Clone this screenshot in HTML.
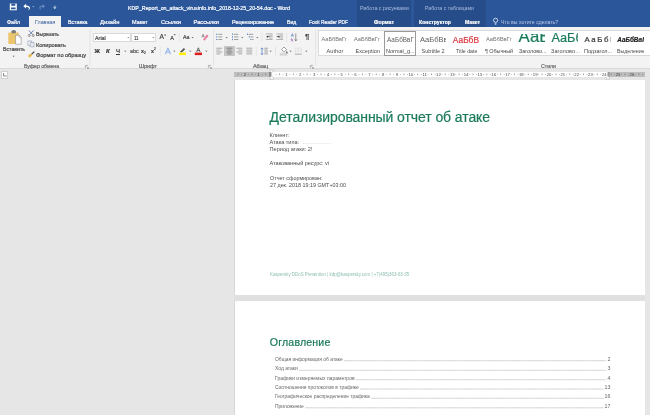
<!DOCTYPE html>
<html lang="ru"><head><meta charset="utf-8"><title>KDP_Report_on_attack_virusinfo.info_2018-12-25_20-54.doc - Word</title>
<style>
*{box-sizing:border-box;margin:0;padding:0}
html,body{width:650px;height:415px;overflow:hidden;background:#e6e6e6;font-family:"Liberation Sans",sans-serif}
.t{position:absolute;white-space:nowrap;line-height:10px;-webkit-text-stroke:0.2px}
.b{position:absolute}
svg{position:absolute;left:0;top:0;will-change:transform}
#txt{position:absolute;left:0;top:0;width:650px;height:415px;will-change:transform}

</style></head><body>
<div class="b" style="left:0;top:0;width:650px;height:26.5px;background:#2b579a"></div>
<div class="b" style="left:357px;top:0;width:54px;height:26.5px;background:#264d8a"></div>
<div class="b" style="left:413.5px;top:0;width:72.5px;height:26.5px;background:#264d8a"></div>
<div class="b" style="left:0;top:26.5px;width:650px;height:42.5px;background:#f3f3f3;border-bottom:1px solid #dadada"></div>
<div class="b" style="left:28.8px;top:16px;width:32.4px;height:11px;background:#f3f3f3"></div>
<div class="b" style="left:317.5px;top:29.6px;width:333px;height:26.9px;background:#fff;border:1px solid #dadada;border-right:0"></div>
<div class="b" style="left:384px;top:31px;width:32px;height:24.6px;border:1px solid #9a9a9a;background:#fff"></div>
<div class="b" style="left:93px;top:33px;width:38.4px;height:9px;background:#fff;border:0.5px solid #dadada"></div>
<div class="b" style="left:131.4px;top:33px;width:24.8px;height:9px;background:#fff;border:0.5px solid #dadada"></div>
<div class="b" style="left:224px;top:46px;width:10.6px;height:10.2px;background:#c6c6c6"></div>
<div class="b" style="left:234.4px;top:80px;width:410.6px;height:214.6px;background:#fff;border-left:1px solid #d6d6d6"></div>
<div class="b" style="left:234.4px;top:300.8px;width:410.6px;height:120px;background:#fff;border-left:1px solid #d6d6d6"></div>
<div class="b" style="left:234.4px;top:294.6px;width:410.6px;height:6.2px;background:#e0e0e0"></div>
<div class="b" style="left:234px;top:72px;width:411px;height:4.6px;background:#fff"></div>
<div class="b" style="left:234px;top:72px;width:37px;height:4.6px;background:#bebebe"></div>
<div class="b" style="left:608px;top:72px;width:37px;height:4.6px;background:#bebebe"></div>
<div class="b" style="left:1px;top:71px;width:7.4px;height:7.6px;background:#fff;border:0.5px solid #d0d0d0"></div>

<svg width="650" height="415" viewBox="0 0 650 415">
<path d="M9.8 3.6h7v6.6h-7z" fill="#fff"/><path d="M11.3 3.6h4v2.2h-4z M11 7.6h4.6v1.6h-4.6z" fill="#2b579a"/>
<path d="M23.3 6.2l2.8-2.4v1.6c2.6 0 3.9 1.2 3.9 2.6c0 1.200-.9 2-2.4 2.200c.9-.4 1.300-1 1.300-1.800c0-.9-.9-1.500-2.800-1.500v1.700z" fill="#fff"/>
<path d="M32.40 6.30h1.8l-0.90 1z" fill="#dfe7f5"/>
<path d="M45 6.200l-2.300-2v1.300c-2.200 0-3.300 1-3.300 2.200c0 1 .8 1.700 2 1.900c-.7-.4-1.100-.9-1.100-1.500c0-.8.800-1.300 2.400-1.300v1.400z" fill="#6f8fc4"/>
<path d="M53.600 6.200h2.400M53.600 7.600h2.400l-1.200 1.200z" stroke="#dfe7f5" stroke-width=".5" fill="#dfe7f5"/>
<circle cx="495.600" cy="20.300" r="2.100" fill="none" stroke="#e8eefa" stroke-width=".8"/><path d="M494.700 23.300h1.800M494.900 24.400h1.400" stroke="#e8eefa" stroke-width=".7"/>
<path d="M90 29.500v37" stroke="#dcdcdc" stroke-width=".7"/>
<path d="M213.6 29.500v37" stroke="#dcdcdc" stroke-width=".7"/>
<path d="M315.6 29.500v37" stroke="#dcdcdc" stroke-width=".7"/>
<path d="M179.4 33v9" stroke="#dedede" stroke-width=".6"/>
<path d="M160.3 46.5v9.5" stroke="#dedede" stroke-width=".6"/>
<path d="M262 33v9" stroke="#dedede" stroke-width=".6"/>
<path d="M286.6 33v9" stroke="#dedede" stroke-width=".6"/>
<path d="M256.3 46.5v9.5" stroke="#dedede" stroke-width=".6"/>
<path d="M275.6 46.5v9.5" stroke="#dedede" stroke-width=".6"/>
<rect x="8.300" y="32.400" width="10.400" height="11.500" rx=".6" fill="#ebc46c"/>
<rect x="11.500" y="30.600" width="4.400" height="2.600" rx=".6" fill="#7a7a7a"/><rect x="12.800" y="30" width="1.800" height="1.400" fill="#7a7a7a"/>
<path d="M15.600 35.200h3.600l2 2v7h-5.600z" fill="#fff" stroke="#8a8a8a" stroke-width=".6"/><path d="M19.200 35.200v2h2" fill="none" stroke="#8a8a8a" stroke-width=".5"/>
<path d="M12.50 55.70h2.2l-1.10 1.2z" fill="#666"/>
<path d="M28.800 30.400l4 4.200M33.600 30.400l-4 4.200" stroke="#4c6fa8" stroke-width=".8" fill="none"/><circle cx="29.200" cy="35.500" r="1" fill="none" stroke="#5a5a5a" stroke-width=".6"/><circle cx="33.200" cy="35.500" r="1" fill="none" stroke="#5a5a5a" stroke-width=".6"/>
<path d="M28 41h3.600v4.400h-3.600z" fill="#fff" stroke="#7f8ea8" stroke-width=".6"/><path d="M30.200 42.400h3.800v4.400h-3.800z" fill="#fff" stroke="#7f8ea8" stroke-width=".6"/><path d="M31 43.800h2.200M31 45.200h2.200" stroke="#9aa6bb" stroke-width=".4"/>
<path d="M34.300 51.600l-2.800 2.800" stroke="#444" stroke-width="1.300"/><path d="M30.300 53.400l2 2l-2.600 2.400l-2-1.800z" fill="#e9bf55"/>
<path d="M85.4 68.0v-2.6h2.6" fill="none" stroke="#777" stroke-width=".5"/><path d="M86.60000000000001 66.60000000000001l1.8 1.8m0-1.4v1.4h-1.4" fill="none" stroke="#777" stroke-width=".5"/>
<path d="M127.30 37.25h2l-1.00 1.1z" fill="#666"/>
<path d="M152.30 37.25h2l-1.00 1.1z" fill="#666"/>
<path d="M164 35.400l1.100-1.400l1.100 1.400z" fill="#444"/>
<path d="M173.600 34.200h2.200l-1.100 1.400z" fill="#444"/>
<path d="M191.50 37.00h2.2l-1.10 1.2z" fill="#666"/>
<path d="M203 39.400l3.800-5l1.700 1.300l-3.800 5z" fill="#e8799c"/><path d="M204.400 37.600l1.700 1.300" stroke="#fff" stroke-width=".5"/><path d="M201.800 37.400l1.300-3.200l1.300 3.200M202.300 36.400h1.600" fill="none" stroke="#666" stroke-width=".6"/>
<path d="M124.20 50.70h2.2l-1.10 1.2z" fill="#666"/>
<path d="M165.300 54.200l2.600-6.200l2.600 6.200M166.300 52h3.200" fill="none" stroke="#c3d7f3" stroke-width="1.600" stroke-linejoin="round"/><path d="M165.300 54.200l2.600-6.200l2.600 6.200M166.300 52h3.200" fill="none" stroke="#7ea6de" stroke-width=".55"/>
<path d="M173.20 50.70h2.2l-1.10 1.2z" fill="#666"/>
<path d="M180.400 51.400l3.400-3.400l1.400 1.300l-3.500 3.400z" fill="#5a5a5a"/><path d="M180 52.200l.5-1l1 .9z" fill="#333"/><rect x="179" y="52.600" width="7" height="2.500" fill="#fff100"/>
<path d="M189.20 50.70h2.2l-1.10 1.2z" fill="#666"/>
<path d="M196.600 52l1.750-4.200l1.750 4.200M197.300 50.600h2.100" fill="none" stroke="#444" stroke-width=".8"/><rect x="194.800" y="52.600" width="7.200" height="2.500" fill="#e01b1b"/>
<path d="M205.20 50.70h2.2l-1.10 1.2z" fill="#666"/>
<path d="M208.4 68.0v-2.6h2.6" fill="none" stroke="#777" stroke-width=".5"/><path d="M209.6 66.60000000000001l1.8 1.8m0-1.4v1.4h-1.4" fill="none" stroke="#777" stroke-width=".5"/>
<rect x="216.200" y="33.70" width="1.100" height="1.100" fill="#4c78c0"/>
<rect x="216.200" y="36.30" width="1.100" height="1.100" fill="#4c78c0"/>
<rect x="216.200" y="38.90" width="1.100" height="1.100" fill="#4c78c0"/>
<path d="M218.30 34.30h4" stroke="#666" stroke-width="0.6"/>
<path d="M218.30 36.90h4" stroke="#666" stroke-width="0.6"/>
<path d="M218.30 39.50h4" stroke="#666" stroke-width="0.6"/>
<path d="M225.50 37.00h2.2l-1.10 1.2z" fill="#666"/>
<rect x="232.200" y="33.50" width=".8" height="1.500" fill="#4c78c0"/>
<rect x="232.200" y="36.10" width=".8" height="1.500" fill="#4c78c0"/>
<rect x="232.200" y="38.70" width=".8" height="1.500" fill="#4c78c0"/>
<path d="M234.00 34.30h4.4" stroke="#666" stroke-width="0.6"/>
<path d="M234.00 36.90h4.4" stroke="#666" stroke-width="0.6"/>
<path d="M234.00 39.50h4.4" stroke="#666" stroke-width="0.6"/>
<path d="M241.20 37.00h2.2l-1.10 1.2z" fill="#666"/>
<rect x="247" y="33.600" width="1" height="1.200" fill="#4c78c0"/><rect x="248.800" y="36.200" width="1" height="1.200" fill="#4c78c0"/><rect x="250.400" y="38.800" width="1" height="1.200" fill="#4c78c0"/>
<path d="M248.60 34.30h4.6" stroke="#666" stroke-width="0.6"/>
<path d="M250.40 36.90h3" stroke="#666" stroke-width="0.6"/>
<path d="M252.00 39.50h1.6" stroke="#666" stroke-width="0.6"/>
<path d="M256.20 37.00h2.2l-1.10 1.2z" fill="#666"/>
<path d="M265.80 33.90h6.8" stroke="#8a8a8a" stroke-width="0.6"/>
<path d="M265.80 39.50h6.8" stroke="#8a8a8a" stroke-width="0.6"/>
<path d="M269.00 35.30h3.6" stroke="#a8a8a8" stroke-width="0.7"/>
<path d="M269.00 36.70h3.6" stroke="#a8a8a8" stroke-width="0.7"/>
<path d="M269.00 38.10h3.6" stroke="#a8a8a8" stroke-width="0.7"/>
<path d="M276.30 33.90h6.8" stroke="#8a8a8a" stroke-width="0.6"/>
<path d="M276.30 39.50h6.8" stroke="#8a8a8a" stroke-width="0.6"/>
<path d="M279.50 35.30h3.6" stroke="#a8a8a8" stroke-width="0.7"/>
<path d="M279.50 36.70h3.6" stroke="#a8a8a8" stroke-width="0.7"/>
<path d="M279.50 38.10h3.6" stroke="#a8a8a8" stroke-width="0.7"/>
<path d="M266.300 36.700l1.500-1.300v.9h1.700v.8h-1.700v.9z" fill="#333"/>
<path d="M280 36.700l-1.500-1.300v.9h-1.700v.8h1.700v.9z" fill="#333"/>
<path d="M291.200 36.600l1.200-3l1.200 3M291.600 35.700h1.600" fill="none" stroke="#4c78c0" stroke-width=".6"/><path d="M291.300 41.400l.9-1.200c.5-.6.300-1.500-.5-1.500c-.7 0-.9.700-.4 1.100l1.900 1.600" fill="none" stroke="#8a4fb0" stroke-width=".6"/><path d="M295.800 33.400v7.400M294.600 39.400l1.200 1.600l1.200-1.600" fill="none" stroke="#555" stroke-width=".6"/>
<path d="M216.30 48.20h6" stroke="#777" stroke-width="0.6"/>
<path d="M216.30 50.10h4" stroke="#777" stroke-width="0.6"/>
<path d="M216.30 52.00h6" stroke="#777" stroke-width="0.6"/>
<path d="M216.30 53.90h4" stroke="#777" stroke-width="0.6"/>
<path d="M226.4 48.20h6" stroke="#555" stroke-width=".6"/>
<path d="M227.4 50.10h4" stroke="#555" stroke-width=".6"/>
<path d="M226.4 52.00h6" stroke="#555" stroke-width=".6"/>
<path d="M227.4 53.90h4" stroke="#555" stroke-width=".6"/>
<path d="M236.3 48.20h6" stroke="#777" stroke-width=".6"/>
<path d="M238.3 50.10h4" stroke="#777" stroke-width=".6"/>
<path d="M236.3 52.00h6" stroke="#777" stroke-width=".6"/>
<path d="M238.3 53.90h4" stroke="#777" stroke-width=".6"/>
<path d="M246.30 48.20h6" stroke="#777" stroke-width="0.6"/>
<path d="M246.30 50.10h6" stroke="#777" stroke-width="0.6"/>
<path d="M246.30 52.00h6" stroke="#777" stroke-width="0.6"/>
<path d="M246.30 53.90h6" stroke="#777" stroke-width="0.6"/>
<path d="M262 48v6.600M260.900 49.300l1.100-1.500l1.100 1.500M260.900 53.300l1.100 1.500l1.100-1.500" fill="none" stroke="#4c78c0" stroke-width=".7"/>
<path d="M264.40 48.20h3.4" stroke="#666" stroke-width="0.6"/>
<path d="M264.40 50.10h3.4" stroke="#666" stroke-width="0.6"/>
<path d="M264.40 52.00h3.4" stroke="#666" stroke-width="0.6"/>
<path d="M264.40 53.90h3.4" stroke="#666" stroke-width="0.6"/>
<path d="M269.50 50.70h2.2l-1.10 1.2z" fill="#666"/>
<path d="M281.600 49.400l2.400-2.400l2.600 2.600l-2.600 2.600z" fill="#fff" stroke="#666" stroke-width=".6"/><path d="M286.800 51c.6.900.9 1.400.9 1.800a.8.800 0 0 1-1.700 0c0-.4.300-.9.800-1.800z" fill="#666"/><rect x="280" y="53.600" width="7" height="1.600" fill="#d9d9d9" stroke="#bbb" stroke-width=".3"/>
<path d="M289.50 50.70h2.2l-1.10 1.2z" fill="#666"/>
<rect x="295.300" y="48" width="6" height="6" fill="none" stroke="#c4c4c4" stroke-width=".5" stroke-dasharray=".6 .6"/><path d="M298.300 48v6M295.300 51h6" stroke="#c4c4c4" stroke-width=".5" stroke-dasharray=".6 .6"/><path d="M295 54.200h6.600" stroke="#999" stroke-width=".7"/>
<path d="M305.20 50.70h2.2l-1.10 1.2z" fill="#666"/>
<path d="M310.4 68.0v-2.6h2.6" fill="none" stroke="#777" stroke-width=".5"/><path d="M311.59999999999997 66.60000000000001l1.8 1.8m0-1.4v1.4h-1.4" fill="none" stroke="#777" stroke-width=".5"/>
<path d="M3.600 73v3h3" fill="none" stroke="#555" stroke-width=".7"/>
<text x="244.96" y="75.800" font-size="4.200" fill="#3a3a3a" text-anchor="middle" font-family="Liberation Sans,sans-serif">2</text>
<text x="258.78" y="75.800" font-size="4.200" fill="#3a3a3a" text-anchor="middle" font-family="Liberation Sans,sans-serif">1</text>
<text x="286.42" y="75.800" font-size="4.200" fill="#4a4a4a" text-anchor="middle" font-family="Liberation Sans,sans-serif">1</text>
<text x="300.24" y="75.800" font-size="4.200" fill="#4a4a4a" text-anchor="middle" font-family="Liberation Sans,sans-serif">2</text>
<text x="314.06" y="75.800" font-size="4.200" fill="#4a4a4a" text-anchor="middle" font-family="Liberation Sans,sans-serif">3</text>
<text x="327.88" y="75.800" font-size="4.200" fill="#4a4a4a" text-anchor="middle" font-family="Liberation Sans,sans-serif">4</text>
<text x="341.70" y="75.800" font-size="4.200" fill="#4a4a4a" text-anchor="middle" font-family="Liberation Sans,sans-serif">5</text>
<text x="355.52" y="75.800" font-size="4.200" fill="#4a4a4a" text-anchor="middle" font-family="Liberation Sans,sans-serif">6</text>
<text x="369.34" y="75.800" font-size="4.200" fill="#4a4a4a" text-anchor="middle" font-family="Liberation Sans,sans-serif">7</text>
<text x="383.16" y="75.800" font-size="4.200" fill="#4a4a4a" text-anchor="middle" font-family="Liberation Sans,sans-serif">8</text>
<text x="396.98" y="75.800" font-size="4.200" fill="#4a4a4a" text-anchor="middle" font-family="Liberation Sans,sans-serif">9</text>
<text x="410.80" y="75.800" font-size="4.200" fill="#4a4a4a" text-anchor="middle" font-family="Liberation Sans,sans-serif">10</text>
<text x="424.62" y="75.800" font-size="4.200" fill="#4a4a4a" text-anchor="middle" font-family="Liberation Sans,sans-serif">11</text>
<text x="438.44" y="75.800" font-size="4.200" fill="#4a4a4a" text-anchor="middle" font-family="Liberation Sans,sans-serif">12</text>
<text x="452.26" y="75.800" font-size="4.200" fill="#4a4a4a" text-anchor="middle" font-family="Liberation Sans,sans-serif">13</text>
<text x="466.08" y="75.800" font-size="4.200" fill="#4a4a4a" text-anchor="middle" font-family="Liberation Sans,sans-serif">14</text>
<text x="479.90" y="75.800" font-size="4.200" fill="#4a4a4a" text-anchor="middle" font-family="Liberation Sans,sans-serif">15</text>
<text x="493.72" y="75.800" font-size="4.200" fill="#4a4a4a" text-anchor="middle" font-family="Liberation Sans,sans-serif">16</text>
<text x="507.54" y="75.800" font-size="4.200" fill="#4a4a4a" text-anchor="middle" font-family="Liberation Sans,sans-serif">17</text>
<text x="521.36" y="75.800" font-size="4.200" fill="#4a4a4a" text-anchor="middle" font-family="Liberation Sans,sans-serif">18</text>
<text x="535.18" y="75.800" font-size="4.200" fill="#4a4a4a" text-anchor="middle" font-family="Liberation Sans,sans-serif">19</text>
<text x="549.00" y="75.800" font-size="4.200" fill="#4a4a4a" text-anchor="middle" font-family="Liberation Sans,sans-serif">20</text>
<text x="562.82" y="75.800" font-size="4.200" fill="#4a4a4a" text-anchor="middle" font-family="Liberation Sans,sans-serif">21</text>
<text x="576.64" y="75.800" font-size="4.200" fill="#4a4a4a" text-anchor="middle" font-family="Liberation Sans,sans-serif">22</text>
<text x="590.46" y="75.800" font-size="4.200" fill="#4a4a4a" text-anchor="middle" font-family="Liberation Sans,sans-serif">23</text>
<text x="604.28" y="75.800" font-size="4.200" fill="#4a4a4a" text-anchor="middle" font-family="Liberation Sans,sans-serif">24</text>
<text x="618.10" y="75.800" font-size="4.200" fill="#3a3a3a" text-anchor="middle" font-family="Liberation Sans,sans-serif">25</text>
<text x="631.92" y="75.800" font-size="4.200" fill="#3a3a3a" text-anchor="middle" font-family="Liberation Sans,sans-serif">26</text>
<path d="M238.05 73.400v1.800" stroke="#555" stroke-width=".5"/>
<rect x="241.26" y="74" width=".6" height=".6" fill="#555"/>
<path d="M251.87 73.400v1.800" stroke="#555" stroke-width=".5"/>
<rect x="248.17" y="74" width=".6" height=".6" fill="#555"/>
<rect x="255.08" y="74" width=".6" height=".6" fill="#555"/>
<path d="M265.69 73.400v1.800" stroke="#555" stroke-width=".5"/>
<rect x="261.99" y="74" width=".6" height=".6" fill="#555"/>
<rect x="268.90" y="74" width=".6" height=".6" fill="#555"/>
<path d="M279.51 73.400v1.800" stroke="#555" stroke-width=".5"/>
<rect x="275.81" y="74" width=".6" height=".6" fill="#555"/>
<rect x="282.72" y="74" width=".6" height=".6" fill="#555"/>
<path d="M293.33 73.400v1.800" stroke="#555" stroke-width=".5"/>
<rect x="289.62" y="74" width=".6" height=".6" fill="#555"/>
<rect x="296.54" y="74" width=".6" height=".6" fill="#555"/>
<path d="M307.15 73.400v1.800" stroke="#555" stroke-width=".5"/>
<rect x="303.44" y="74" width=".6" height=".6" fill="#555"/>
<rect x="310.36" y="74" width=".6" height=".6" fill="#555"/>
<path d="M320.97 73.400v1.800" stroke="#555" stroke-width=".5"/>
<rect x="317.26" y="74" width=".6" height=".6" fill="#555"/>
<rect x="324.18" y="74" width=".6" height=".6" fill="#555"/>
<path d="M334.79 73.400v1.800" stroke="#555" stroke-width=".5"/>
<rect x="331.08" y="74" width=".6" height=".6" fill="#555"/>
<rect x="338.00" y="74" width=".6" height=".6" fill="#555"/>
<path d="M348.61 73.400v1.800" stroke="#555" stroke-width=".5"/>
<rect x="344.91" y="74" width=".6" height=".6" fill="#555"/>
<rect x="351.82" y="74" width=".6" height=".6" fill="#555"/>
<path d="M362.43 73.400v1.800" stroke="#555" stroke-width=".5"/>
<rect x="358.73" y="74" width=".6" height=".6" fill="#555"/>
<rect x="365.64" y="74" width=".6" height=".6" fill="#555"/>
<path d="M376.25 73.400v1.800" stroke="#555" stroke-width=".5"/>
<rect x="372.55" y="74" width=".6" height=".6" fill="#555"/>
<rect x="379.46" y="74" width=".6" height=".6" fill="#555"/>
<path d="M390.07 73.400v1.800" stroke="#555" stroke-width=".5"/>
<rect x="386.37" y="74" width=".6" height=".6" fill="#555"/>
<rect x="393.28" y="74" width=".6" height=".6" fill="#555"/>
<path d="M403.89 73.400v1.800" stroke="#555" stroke-width=".5"/>
<rect x="400.19" y="74" width=".6" height=".6" fill="#555"/>
<rect x="407.10" y="74" width=".6" height=".6" fill="#555"/>
<path d="M417.71 73.400v1.800" stroke="#555" stroke-width=".5"/>
<rect x="414.00" y="74" width=".6" height=".6" fill="#555"/>
<rect x="420.92" y="74" width=".6" height=".6" fill="#555"/>
<path d="M431.53 73.400v1.800" stroke="#555" stroke-width=".5"/>
<rect x="427.82" y="74" width=".6" height=".6" fill="#555"/>
<rect x="434.74" y="74" width=".6" height=".6" fill="#555"/>
<path d="M445.35 73.400v1.800" stroke="#555" stroke-width=".5"/>
<rect x="441.65" y="74" width=".6" height=".6" fill="#555"/>
<rect x="448.56" y="74" width=".6" height=".6" fill="#555"/>
<path d="M459.17 73.400v1.800" stroke="#555" stroke-width=".5"/>
<rect x="455.46" y="74" width=".6" height=".6" fill="#555"/>
<rect x="462.38" y="74" width=".6" height=".6" fill="#555"/>
<path d="M472.99 73.400v1.800" stroke="#555" stroke-width=".5"/>
<rect x="469.29" y="74" width=".6" height=".6" fill="#555"/>
<rect x="476.20" y="74" width=".6" height=".6" fill="#555"/>
<path d="M486.81 73.400v1.800" stroke="#555" stroke-width=".5"/>
<rect x="483.11" y="74" width=".6" height=".6" fill="#555"/>
<rect x="490.02" y="74" width=".6" height=".6" fill="#555"/>
<path d="M500.63 73.400v1.800" stroke="#555" stroke-width=".5"/>
<rect x="496.93" y="74" width=".6" height=".6" fill="#555"/>
<rect x="503.84" y="74" width=".6" height=".6" fill="#555"/>
<path d="M514.45 73.400v1.800" stroke="#555" stroke-width=".5"/>
<rect x="510.75" y="74" width=".6" height=".6" fill="#555"/>
<rect x="517.65" y="74" width=".6" height=".6" fill="#555"/>
<path d="M528.27 73.400v1.800" stroke="#555" stroke-width=".5"/>
<rect x="524.57" y="74" width=".6" height=".6" fill="#555"/>
<rect x="531.48" y="74" width=".6" height=".6" fill="#555"/>
<path d="M542.09 73.400v1.800" stroke="#555" stroke-width=".5"/>
<rect x="538.39" y="74" width=".6" height=".6" fill="#555"/>
<rect x="545.30" y="74" width=".6" height=".6" fill="#555"/>
<path d="M555.91 73.400v1.800" stroke="#555" stroke-width=".5"/>
<rect x="552.21" y="74" width=".6" height=".6" fill="#555"/>
<rect x="559.12" y="74" width=".6" height=".6" fill="#555"/>
<path d="M569.73 73.400v1.800" stroke="#555" stroke-width=".5"/>
<rect x="566.03" y="74" width=".6" height=".6" fill="#555"/>
<rect x="572.94" y="74" width=".6" height=".6" fill="#555"/>
<path d="M583.55 73.400v1.800" stroke="#555" stroke-width=".5"/>
<rect x="579.85" y="74" width=".6" height=".6" fill="#555"/>
<rect x="586.76" y="74" width=".6" height=".6" fill="#555"/>
<path d="M597.37 73.400v1.800" stroke="#555" stroke-width=".5"/>
<rect x="593.67" y="74" width=".6" height=".6" fill="#555"/>
<rect x="600.58" y="74" width=".6" height=".6" fill="#555"/>
<path d="M611.19 73.400v1.800" stroke="#555" stroke-width=".5"/>
<rect x="607.49" y="74" width=".6" height=".6" fill="#555"/>
<rect x="614.39" y="74" width=".6" height=".6" fill="#555"/>
<path d="M625.01 73.400v1.800" stroke="#555" stroke-width=".5"/>
<rect x="621.31" y="74" width=".6" height=".6" fill="#555"/>
<rect x="628.22" y="74" width=".6" height=".6" fill="#555"/>
<path d="M638.83 73.400v1.800" stroke="#555" stroke-width=".5"/>
<rect x="635.13" y="74" width=".6" height=".6" fill="#555"/>
<rect x="642.04" y="74" width=".6" height=".6" fill="#555"/>
<rect x="269" y="72" width="2.400" height="4.600" fill="#8c8c8c"/>
<rect x="607.600" y="72" width="2" height="4.600" fill="#9a9a9a"/>
<path d="M269.900 70h3.400v1.200l-1.700 1.300l-1.700-1.300z" fill="#fff" stroke="#9a9a9a" stroke-width=".4"/>
<path d="M269.900 79.400h3.400v-2l-1.700-1.300l-1.700 1.300z" fill="#fff" stroke="#9a9a9a" stroke-width=".4"/>
<path d="M606.100 79h3.400v-1.600l-1.700-1.300l-1.700 1.300z" fill="#fff" stroke="#9a9a9a" stroke-width=".4"/>
<path d="M344.0 360.70H606" stroke="#999" stroke-width=".6" stroke-dasharray=".7 .35"/>
<path d="M299.0 370.30H606" stroke="#999" stroke-width=".6" stroke-dasharray=".7 .35"/>
<path d="M355.8 379.70H606" stroke="#999" stroke-width=".6" stroke-dasharray=".7 .35"/>
<path d="M360.0 389.00H603.6" stroke="#999" stroke-width=".6" stroke-dasharray=".7 .35"/>
<path d="M371.0 398.30H603.6" stroke="#999" stroke-width=".6" stroke-dasharray=".7 .35"/>
<path d="M305.0 407.80H603.6" stroke="#999" stroke-width=".6" stroke-dasharray=".7 .35"/>
<path d="M303 143.600h28" stroke="#c8c8c8" stroke-width=".5" stroke-dasharray="1.500 1.200"/>
</svg>

<div id="txt">
<span class="t" style="left:128.00px;top:3.40px;font-size:5.7px;color:#fff;transform:scaleX(0.9304);transform-origin:0 0;">KDP_Report_on_attack_virusinfo.info_2018-12-25_20-54.doc - Word</span>
<span class="t" style="left:360.00px;top:3.40px;font-size:5.4px;color:#a9bcde;letter-spacing:-0.081px;-webkit-text-stroke:0;">Работа с рисунками</span>
<span class="t" style="left:425.00px;top:3.40px;font-size:5.4px;color:#a9bcde;-webkit-text-stroke:0;transform:scaleX(0.9664);transform-origin:0 0;">Работа с таблицами</span>
<span class="t" style="left:6.80px;top:16.60px;font-size:5.8px;color:#fff;transform:scaleX(0.9253);transform-origin:0 0;">Файл</span>
<span class="t" style="left:34.60px;top:16.60px;font-size:5.8px;color:#2b579a;-webkit-text-stroke:0;transform:scaleX(0.9149);transform-origin:0 0;">Главная</span>
<span class="t" style="left:68.00px;top:16.60px;font-size:5.8px;color:#fff;transform:scaleX(0.9050);transform-origin:0 0;">Вставка</span>
<span class="t" style="left:100.00px;top:16.60px;font-size:5.8px;color:#fff;letter-spacing:-0.017px;">Дизайн</span>
<span class="t" style="left:132.00px;top:16.60px;font-size:5.8px;color:#fff;transform:scaleX(0.9509);transform-origin:0 0;">Макет</span>
<span class="t" style="left:161.00px;top:16.60px;font-size:5.8px;color:#fff;letter-spacing:-0.070px;">Ссылки</span>
<span class="t" style="left:193.60px;top:16.60px;font-size:5.8px;color:#fff;letter-spacing:-0.079px;">Рассылки</span>
<span class="t" style="left:231.60px;top:16.60px;font-size:5.8px;color:#fff;transform:scaleX(0.9382);transform-origin:0 0;">Рецензирование</span>
<span class="t" style="left:286.60px;top:16.60px;font-size:5.8px;color:#fff;transform:scaleX(0.8952);transform-origin:0 0;">Вид</span>
<span class="t" style="left:309.00px;top:16.60px;font-size:5.8px;color:#fff;transform:scaleX(0.8407);transform-origin:0 0;">Foxit Reader PDF</span>
<span class="t" style="left:374.00px;top:16.60px;font-size:5.8px;color:#fff;font-weight:700;transform:scaleX(0.8995);transform-origin:0 0;">Формат</span>
<span class="t" style="left:419.00px;top:16.60px;font-size:5.8px;color:#fff;font-weight:700;transform:scaleX(0.8870);transform-origin:0 0;">Конструктор</span>
<span class="t" style="left:465.00px;top:16.60px;font-size:5.8px;color:#fff;font-weight:700;transform:scaleX(0.8815);transform-origin:0 0;">Макет</span>
<span class="t" style="left:501.40px;top:16.60px;font-size:5.8px;color:#bccbe8;-webkit-text-stroke:0;transform:scaleX(0.8924);transform-origin:0 0;">Что вы хотите сделать?</span>
<span class="t" style="left:3.00px;top:44.40px;font-size:5.7px;color:#444;transform:scaleX(0.9125);transform-origin:0 0;">Вставить</span>
<span class="t" style="left:36.00px;top:29.00px;font-size:5.7px;color:#444;transform:scaleX(0.9092);transform-origin:0 0;">Вырезать</span>
<span class="t" style="left:36.00px;top:39.60px;font-size:5.7px;color:#444;letter-spacing:-0.062px;">Копировать</span>
<span class="t" style="left:36.00px;top:50.40px;font-size:5.7px;color:#444;letter-spacing:-0.059px;">Формат по образцу</span>
<span class="t" style="left:24.00px;top:60.60px;font-size:5.5px;color:#666;transform:scaleX(0.9365);transform-origin:0 0;">Буфер обмена</span>
<span class="t" style="left:139.00px;top:60.60px;font-size:5.5px;color:#666;letter-spacing:-0.022px;">Шрифт</span>
<span class="t" style="left:253.00px;top:60.60px;font-size:5.5px;color:#666;letter-spacing:-0.087px;">Абзац</span>
<span class="t" style="left:541.00px;top:60.60px;font-size:5.5px;color:#666;transform:scaleX(0.9458);transform-origin:0 0;">Стили</span>
<span class="t" style="left:94.60px;top:32.60px;font-size:5.7px;color:#444;transform:scaleX(0.9481);transform-origin:0 0;">Arial</span>
<span class="t" style="left:134.00px;top:32.60px;font-size:5.7px;color:#444;transform:scaleX(0.7450);transform-origin:0 0;">11</span>
<span class="t" style="left:94.60px;top:46.00px;font-size:6px;color:#333;font-weight:700;letter-spacing:0.562px;">Ж</span>
<span class="t" style="left:106.00px;top:46.00px;font-size:6px;color:#333;font-weight:700;font-style:italic;letter-spacing:0.297px;">К</span>
<span class="t" style="left:116.00px;top:46.00px;font-size:6px;color:#333;letter-spacing:0.000px;text-decoration:underline;">Ч</span>
<span class="t" style="left:130.00px;top:46.00px;font-size:5.4px;color:#555;text-decoration:line-throughtransform:scaleX(0.8043);transform-origin:0 0;">abc</span>
<span class="t" style="left:141.00px;top:46.00px;font-size:6.2px;color:#444;font-weight:700;transform:scaleX(0.8688);transform-origin:0 0;">x</span>
<span class="t" style="left:144.20px;top:48.00px;font-size:3.4px;color:#444;transform:scaleX(0.9521);transform-origin:0 0;">2</span>
<span class="t" style="left:151.00px;top:46.00px;font-size:6.2px;color:#444;font-weight:700;transform:scaleX(0.8688);transform-origin:0 0;">x</span>
<span class="t" style="left:154.20px;top:43.60px;font-size:3.4px;color:#444;transform:scaleX(0.9521);transform-origin:0 0;">2</span>
<span class="t" style="left:159.60px;top:32.20px;font-size:6.6px;color:#444;letter-spacing:0.194px;">A</span>
<span class="t" style="left:170.20px;top:32.60px;font-size:5.4px;color:#444;letter-spacing:0.191px;">A</span>
<span class="t" style="left:182.70px;top:32.40px;font-size:6px;color:#444;transform:scaleX(0.8851);transform-origin:0 0;">Aa</span>
<span class="t" style="left:305.00px;top:32.20px;font-size:8px;color:#444;letter-spacing:0.703px;">¶</span>
<span class="t" style="left:321.60px;top:34.46px;font-size:5.6px;color:#707070;letter-spacing:-0.020px;-webkit-text-stroke:0;">АаБбВвГг</span>
<span class="t" style="left:354.00px;top:34.46px;font-size:5.6px;color:#707070;letter-spacing:0.055px;-webkit-text-stroke:0;">АаБбВвГг</span>
<span class="t" style="left:387.00px;top:35.02px;font-size:6.3px;color:#606060;letter-spacing:0.076px;-webkit-text-stroke:0;">АаБбВвГ</span>
<div class="b" style="left:420px;top:30px;width:26.40px;height:17.00px;overflow:hidden"><span class="t" style="left:0.00px;top:5.20px;font-size:7.5px;color:#606060;-webkit-text-stroke:0;">АаБбВв</span></div>
<span class="t" style="left:452.80px;top:34.89px;font-size:8.4px;color:#d9363e;letter-spacing:-0.004px;">АаБбВ</span>
<span class="t" style="left:486.00px;top:34.46px;font-size:5.6px;color:#707070;letter-spacing:0.055px;-webkit-text-stroke:0;">АаБбВвГг</span>
<div class="b" style="left:518px;top:33.5px;width:27.30px;height:13.50px;overflow:hidden"><span class="t" style="left:0.60px;top:-1.72px;font-size:16.8px;color:#1b7a5c;">АаБ</span></div>
<div class="b" style="left:551px;top:30px;width:26.50px;height:17.00px;overflow:hidden"><span class="t" style="left:0.40px;top:3.20px;font-size:12.7px;color:#1b7a5c;">АаБб</span></div>
<div class="b" style="left:584.4px;top:30px;width:26.90px;height:17.00px;overflow:hidden"><span class="t" style="left:0.00px;top:5.20px;font-size:7.8px;color:#333;letter-spacing:1.650px;">АаБбВ</span></div>
<div class="b" style="left:617.3px;top:30px;width:26.70px;height:17.00px;overflow:hidden"><span class="t" style="left:0.00px;top:5.42px;font-size:6.3px;color:#222;font-weight:700;font-style:italic;">АаБбВвГ</span></div>
<span class="t" style="left:326.40px;top:46.00px;font-size:5.5px;color:#4a4a4a;letter-spacing:0.130px;-webkit-text-stroke:0;">Author</span>
<span class="t" style="left:355.60px;top:46.00px;font-size:5.5px;color:#4a4a4a;letter-spacing:0.027px;-webkit-text-stroke:0;">Exception</span>
<span class="t" style="left:386.00px;top:46.00px;font-size:5.5px;color:#4a4a4a;letter-spacing:0.015px;-webkit-text-stroke:0;">Normal_g...</span>
<span class="t" style="left:421.60px;top:46.00px;font-size:5.5px;color:#4a4a4a;letter-spacing:0.006px;-webkit-text-stroke:0;">Subtitle 2</span>
<span class="t" style="left:455.60px;top:46.00px;font-size:5.5px;color:#4a4a4a;-webkit-text-stroke:0;transform:scaleX(0.9544);transform-origin:0 0;">Title date</span>
<span class="t" style="left:485.00px;top:46.00px;font-size:5.5px;color:#4a4a4a;letter-spacing:-0.089px;-webkit-text-stroke:0;">¶ Обычный</span>
<span class="t" style="left:519.00px;top:46.00px;font-size:5.5px;color:#4a4a4a;letter-spacing:-0.059px;-webkit-text-stroke:0;">Заголово...</span>
<span class="t" style="left:551.00px;top:46.00px;font-size:5.5px;color:#4a4a4a;letter-spacing:0.087px;-webkit-text-stroke:0;">Заголово...</span>
<span class="t" style="left:584.00px;top:46.00px;font-size:5.5px;color:#4a4a4a;letter-spacing:-0.028px;-webkit-text-stroke:0;">Подзагол...</span>
<span class="t" style="left:617.00px;top:46.00px;font-size:5.5px;color:#4a4a4a;-webkit-text-stroke:0;transform:scaleX(0.9398);transform-origin:0 0;">Выделение</span>
<span class="t" style="left:269.60px;top:111.60px;font-size:14px;color:#1b7a5c;letter-spacing:-0.085px;">Детализированный отчет об атаке</span>
<span class="t" style="left:269.60px;top:129.60px;font-size:5.6px;color:#4c4c4c;letter-spacing:0.004px;-webkit-text-stroke:0;">Клиент:</span>
<span class="t" style="left:269.60px;top:136.80px;font-size:5.6px;color:#4c4c4c;letter-spacing:-0.040px;-webkit-text-stroke:0;">Атака типа:</span>
<span class="t" style="left:269.60px;top:144.20px;font-size:5.6px;color:#4c4c4c;letter-spacing:-0.020px;-webkit-text-stroke:0;">Период атаки: 2!</span>
<span class="t" style="left:269.60px;top:158.00px;font-size:5.6px;color:#4c4c4c;letter-spacing:-0.052px;-webkit-text-stroke:0;">Атакованный ресурс: vi</span>
<span class="t" style="left:269.60px;top:172.60px;font-size:5.6px;color:#4c4c4c;-webkit-text-stroke:0;transform:scaleX(0.9640);transform-origin:0 0;">Отчет сформирован:</span>
<span class="t" style="left:269.60px;top:179.60px;font-size:5.6px;color:#4c4c4c;-webkit-text-stroke:0;transform:scaleX(0.9626);transform-origin:0 0;">27 дек. 2018 19:19 GMT+03:00</span>
<span class="t" style="left:269.80px;top:269.80px;font-size:4.7px;color:#8dbdb2;-webkit-text-stroke:0;transform:scaleX(0.9409);transform-origin:0 0;">Kaspersky DDoS Prevention | kdp@kaspersky.com | +7(495)363-63-35</span>
<span class="t" style="left:269.80px;top:336.60px;font-size:10.6px;color:#1b7a5c;letter-spacing:0.164px;">Оглавление</span>
<span class="t" style="left:275.20px;top:353.70px;font-size:5.3px;color:#666;-webkit-text-stroke:0;transform:scaleX(0.9316);transform-origin:0 0;">Общая информация об атаке</span>
<span class="t" style="left:607.60px;top:353.70px;font-size:5.3px;color:#666;letter-spacing:0.247px;-webkit-text-stroke:0;">2</span>
<span class="t" style="left:275.20px;top:363.30px;font-size:5.3px;color:#666;-webkit-text-stroke:0;transform:scaleX(0.9384);transform-origin:0 0;">Ход атаки</span>
<span class="t" style="left:607.60px;top:363.30px;font-size:5.3px;color:#666;letter-spacing:0.247px;-webkit-text-stroke:0;">3</span>
<span class="t" style="left:275.20px;top:372.70px;font-size:5.3px;color:#666;-webkit-text-stroke:0;transform:scaleX(0.9473);transform-origin:0 0;">Графики измеряемых параметров</span>
<span class="t" style="left:607.60px;top:372.70px;font-size:5.3px;color:#666;letter-spacing:0.247px;-webkit-text-stroke:0;">4</span>
<span class="t" style="left:275.20px;top:382.00px;font-size:5.3px;color:#666;-webkit-text-stroke:0;transform:scaleX(0.9300);transform-origin:0 0;">Соотношения протоколов в трафике</span>
<span class="t" style="left:604.40px;top:382.00px;font-size:5.3px;color:#666;letter-spacing:0.247px;-webkit-text-stroke:0;">13</span>
<span class="t" style="left:275.20px;top:391.30px;font-size:5.3px;color:#666;-webkit-text-stroke:0;transform:scaleX(0.9290);transform-origin:0 0;">Географическое распределение трафика</span>
<span class="t" style="left:604.40px;top:391.30px;font-size:5.3px;color:#666;letter-spacing:0.247px;-webkit-text-stroke:0;">16</span>
<span class="t" style="left:275.20px;top:400.80px;font-size:5.3px;color:#666;-webkit-text-stroke:0;transform:scaleX(0.9267);transform-origin:0 0;">Приложение</span>
<span class="t" style="left:604.40px;top:400.80px;font-size:5.3px;color:#666;letter-spacing:0.247px;-webkit-text-stroke:0;">17</span>
</div>
</body></html>
